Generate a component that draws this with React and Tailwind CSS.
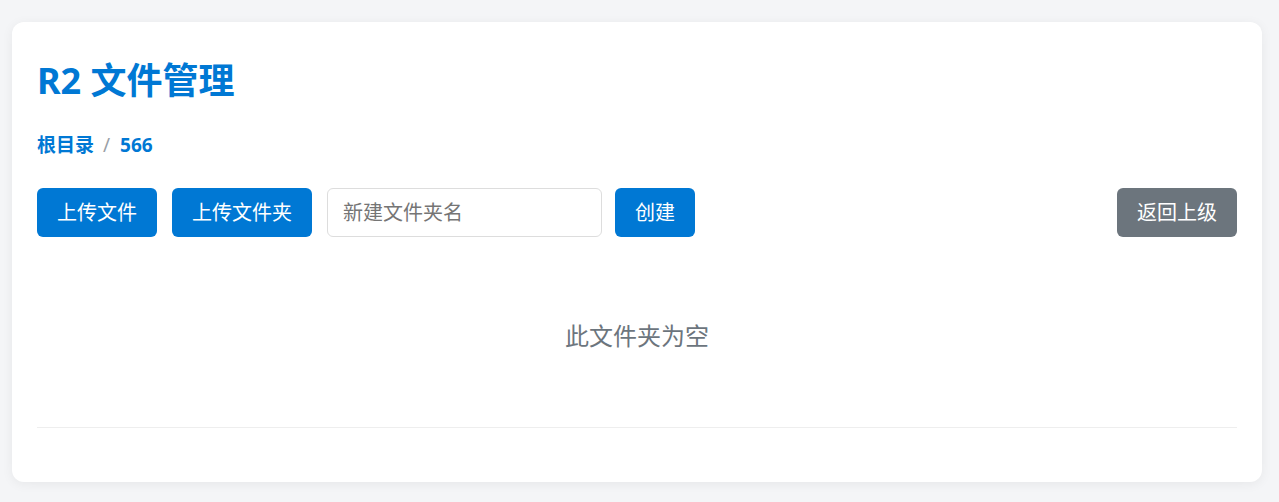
export default function App() {
  const font = { fontFamily: '"Noto Sans", "Noto Sans CJK SC", sans-serif' };
  return (
    <div className="min-h-[502px] bg-[#f4f5f7] pl-[12px] pr-[17px] pt-[22px] pb-[20px]" style={font}>
      <div className="bg-white rounded-[12px] shadow-[0_2px_12px_rgba(0,0,0,0.06)] px-[25px] pt-[25px] pb-[25px]">
        <h1 className="h-[68px] flex items-center text-[36px] font-bold text-[#0078d4] leading-none">R2 文件管理</h1>
        <div className="mt-[18px] h-[24px] flex items-center text-[19px] leading-none">
          <span className="font-bold text-[#0078d4]">根目录</span>
          <span className="ml-[9px] mr-[10px] text-[#9aa0a6] font-normal">/</span>
          <span className="font-bold text-[#0078d4]">566</span>
        </div>
        <div className="mt-[31px] flex items-center h-[49px]">
          <button className="h-[49px] w-[120px] rounded-[6px] bg-[#0078d4] text-white text-[20px] leading-none">上传文件</button>
          <button className="ml-[15px] h-[49px] w-[140px] rounded-[6px] bg-[#0078d4] text-white text-[20px] leading-none">上传文件夹</button>
          <input
            className="ml-[15px] h-[49px] w-[275px] rounded-[6px] border border-[#dddddd] px-[15px] text-[20px] text-[#333] placeholder:text-[#757575] outline-none"
            placeholder="新建文件夹名"
          />
          <button className="ml-[13px] h-[49px] w-[80px] rounded-[6px] bg-[#0078d4] text-white text-[20px] leading-none">创建</button>
          <div className="flex-1" />
          <button className="h-[49px] w-[120px] rounded-[6px] bg-[#6c757d] text-white text-[20px] leading-none">返回上级</button>
        </div>
        <div className="h-[191px] flex items-center justify-center text-[24px] text-[#6c757d] border-b border-[#eeeeee]">
          <span className="mt-[8px]">此文件夹为空</span>
        </div>
        <div className="h-[29px]" />
      </div>
    </div>
  );
}
